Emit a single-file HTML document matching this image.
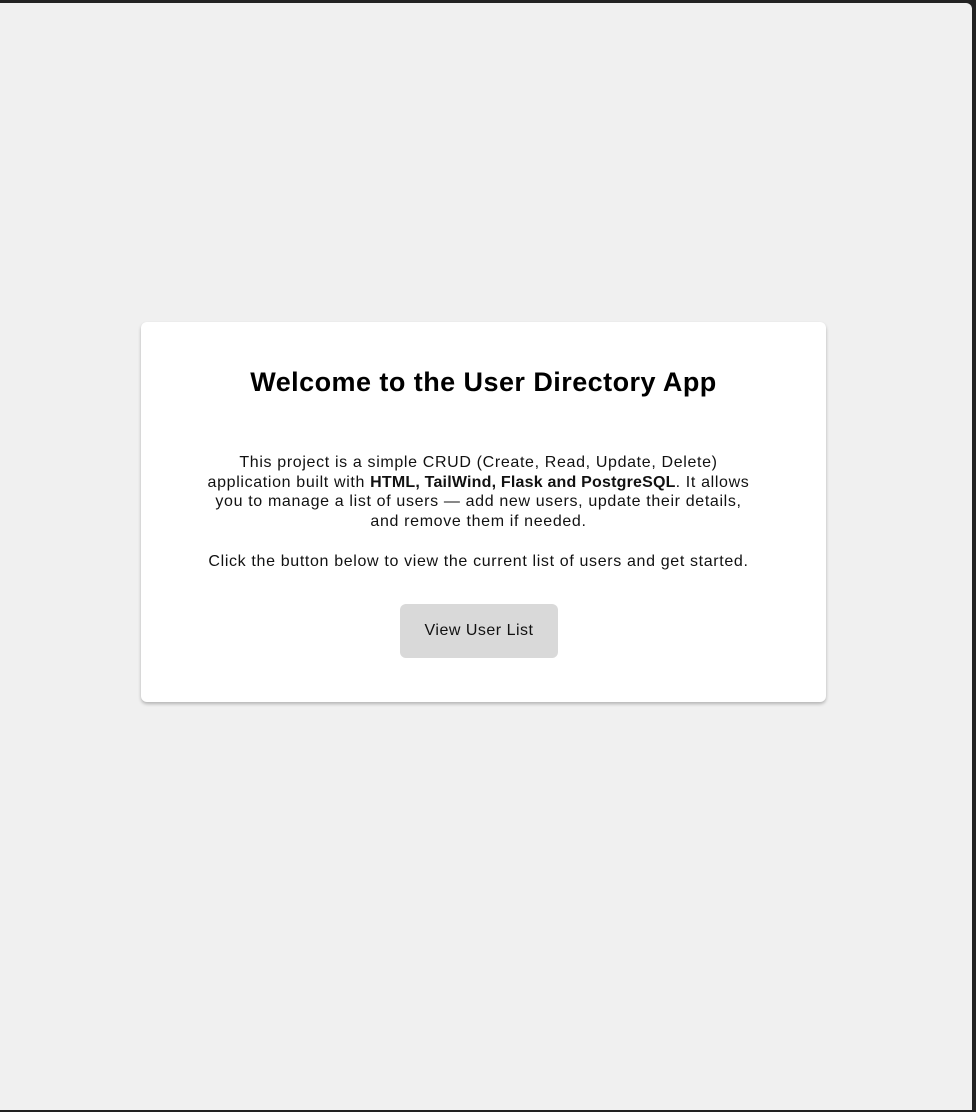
<!DOCTYPE html>
<html><head><style>
html,body{margin:0;padding:0}
body{width:976px;height:1112px;background:#222;position:relative;overflow:hidden;font-family:"Liberation Sans",sans-serif}
.frame{position:absolute;left:0;top:3px;width:972px;height:1107px;background:#f0f0f0;border-top-right-radius:6px}
.card{position:absolute;left:141px;top:319px;width:685px;height:380px;background:#fff;border-radius:6px;box-shadow:0 2px 3px rgba(0,0,0,.25);text-align:center}
h1{margin:0;position:absolute;top:45px;left:0;right:0;font-size:27px;font-weight:bold;color:#000;letter-spacing:0.45px}
.p{position:absolute;top:131px;left:-5px;width:685px;font-size:16px;line-height:19.7px;color:#111;letter-spacing:0.65px;white-space:nowrap}
.p b{letter-spacing:0.2px}
.btn{position:absolute;left:259px;top:282px;width:158px;height:54px;background:#d9d9d9;border-radius:6px;font-size:16px;line-height:54px;color:#111;letter-spacing:0.5px}
</style></head><body>
<div class="frame">
<div class="card">
<h1>Welcome to the User Directory App</h1>
<div class="p">This project is a simple CRUD (Create, Read, Update, Delete)<br>application built with <b>HTML, TailWind, Flask and PostgreSQL</b>. It allows<br>you to manage a list of users — add new users, update their details,<br>and remove them if needed.<br><br>Click the button below to view the current list of users and get started.</div>
<div class="btn">View User List</div>
</div>
</div>
</body></html>
